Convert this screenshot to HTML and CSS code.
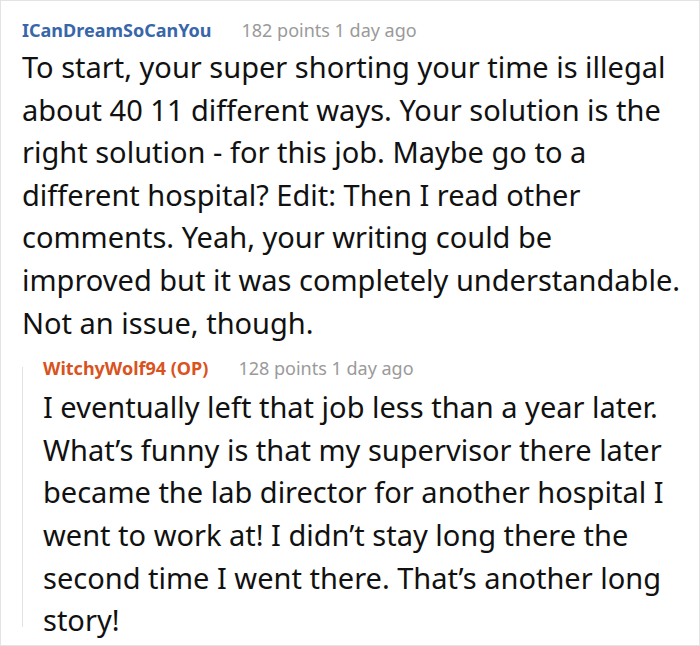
FILE: index.html
```html
<!DOCTYPE html>
<html>
<head>
<meta charset="utf-8">
<link rel="stylesheet" href="styles.css">
</head>
<body>
<div class="thread">
  <div class="comment">
    <div class="meta"><span class="user">ICanDreamSoCanYou</span><span class="info">182 points 1 day ago</span></div>
    <div class="text">To start, your super shorting your time is illegal about 40 11 different ways. Your solution is the right solution - for this job. Maybe go to a different hospital? Edit: Then I read other comments. Yeah, your writing could be improved but it was completely understandable. Not an issue, though.</div>
    <div class="reply">
      <div class="meta"><span class="user op">WitchyWolf94 (OP)</span><span class="info">128 points 1 day ago</span></div>
      <div class="text">I eventually left that job less than a year later. What’s funny is that my supervisor there later became the lab director for another hospital I went to work at! I didn’t stay long there the second time I went there. That’s another long story!</div>
    </div>
  </div>
</div>
</body>
</html>
```

FILE: styles.css
```css
html, body {
  margin: 0;
  padding: 0;
  background: #ffffff;
}
.thread {
  box-sizing: border-box;
  width: 700px;
  height: 646px;
  border: 1px solid #e3e3e3;
  overflow: hidden;
  font-family: "Noto Sans", "Open Sans", sans-serif;
}
.comment {
  padding: 15px 16px 0 21px;
}
.meta {
  font-size: 18px;
  line-height: 28px;
  white-space: nowrap;
}
.user {
  font-weight: 700;
  color: #3866aa;
}
.user.op {
  color: #d9531e;
}
.info {
  color: #9a9a9a;
  margin-left: 30px;
}
.text {
  margin-top: 2px;
  font-size: 29px;
  line-height: 42.6px;
  color: #111111;
}
.reply {
  position: relative;
  margin-top: 10px;
  padding-left: 21px;
}
.reply::before {
  content: "";
  position: absolute;
  left: 0;
  top: 13px;
  bottom: 15px;
  width: 1px;
  background: #e3e3e3;
}
.reply .meta {
  margin-bottom: 4px;
}
```
